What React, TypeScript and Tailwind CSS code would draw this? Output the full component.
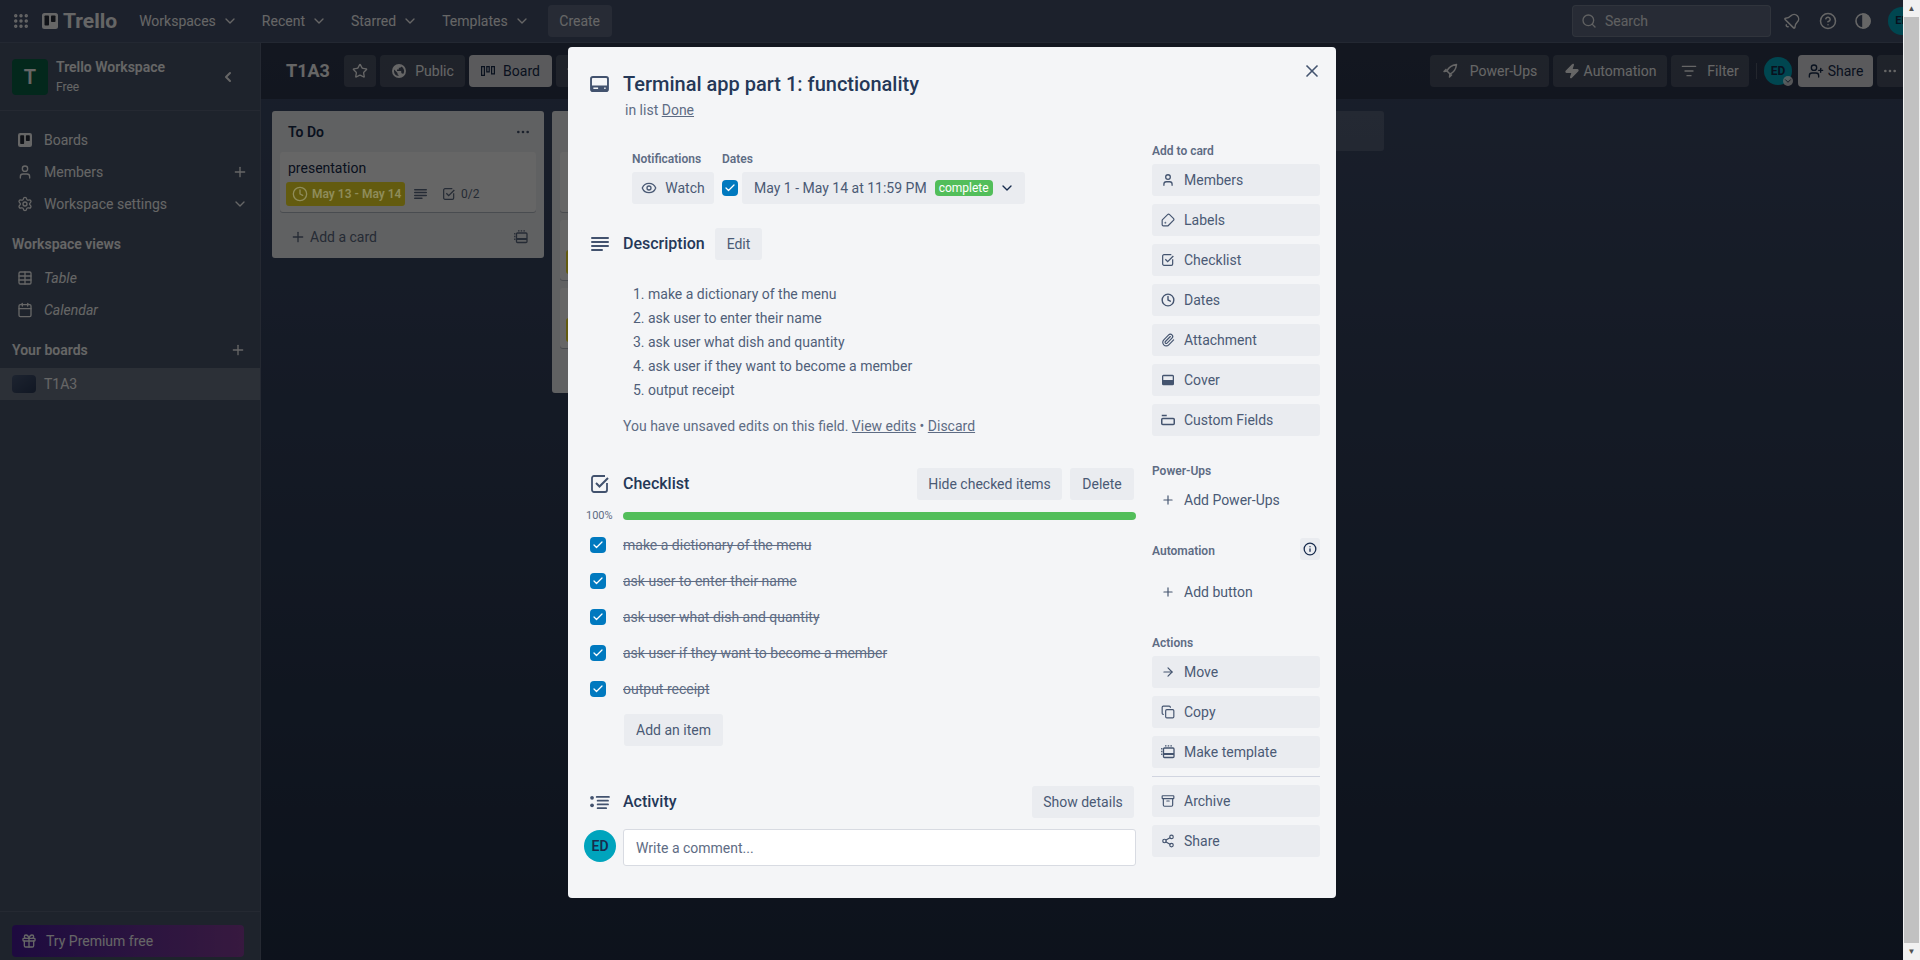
import { ReactNode } from 'react'
import {
  ArrowRight, Bell, Check, ChevronDown, ChevronLeft, Clock, Copy, Ellipsis, Eye, Grip,
  Info, ListFilter, Paperclip, Plus, Search, Settings, Share2, Star, Tag,
  User, UserPlus, X, Zap, CircleHelp, Archive, Calendar, Table, Gift,
} from 'lucide-react'

function CardIcon({ className }: { className?: string }) {
  return (
    <svg viewBox="0 0 20 17" className={className} fill="none">
      <rect x="1" y="1" width="18" height="15" rx="2" stroke="currentColor" strokeWidth="2" />
      <path d="M1 10h18v4a2 2 0 0 1-2 2H3a2 2 0 0 1-2-2z" fill="currentColor" />
      <path d="M3.5 13h5M15 13h1.5" stroke="#f4f5f7" strokeWidth="1.4" />
    </svg>
  )
}

function LinesIcon({ className }: { className?: string }) {
  return (
    <svg viewBox="0 0 18 16" className={className} fill="currentColor">
      <rect x="0" y="1" width="18" height="2" rx="1" />
      <rect x="0" y="5" width="18" height="2" rx="1" />
      <rect x="0" y="9" width="18" height="2" rx="1" />
      <rect x="0" y="13" width="12" height="2" rx="1" />
    </svg>
  )
}

function ChecklistIcon({ className }: { className?: string }) {
  return (
    <svg viewBox="0 0 18 18" className={className} fill="none" stroke="currentColor" strokeWidth="1.8">
      <path d="M16 8v7a2 2 0 0 1-2 2H3a2 2 0 0 1-2-2V3a2 2 0 0 1 2-2h11" />
      <path d="M5 8l3.5 3.5L17 3" strokeWidth="2" />
    </svg>
  )
}

function ActivityIcon({ className }: { className?: string }) {
  return (
    <svg viewBox="0 0 21 16" className={className} fill="currentColor">
      <circle cx="2" cy="3" r="2" />
      <circle cx="2" cy="11" r="2" />
      <rect x="6" y="1" width="15" height="2" rx="1" />
      <rect x="7" y="5" width="13" height="2" rx="1" />
      <rect x="7" y="9" width="13" height="2" rx="1" />
      <rect x="7" y="13" width="11" height="2" rx="1" />
    </svg>
  )
}

function CoverIcon({ className }: { className?: string }) {
  return (
    <svg viewBox="0 0 14 12" className={className} fill="none">
      <rect x="0.75" y="0.75" width="12.5" height="10.5" rx="1" stroke="currentColor" strokeWidth="1.5" />
      <rect x="0.75" y="6" width="12.5" height="5.25" fill="currentColor" />
    </svg>
  )
}

function FieldsIcon({ className }: { className?: string }) {
  return (
    <svg viewBox="0 0 14 12" className={className} fill="none" stroke="currentColor" strokeWidth="1.5">
      <rect x="0.75" y="4.5" width="12.5" height="6" rx="1" />
      <path d="M0.75 1.5h5" />
    </svg>
  )
}

function TemplateIcon({ className }: { className?: string }) {
  return (
    <svg viewBox="0 0 14 14" className={className} fill="none" stroke="currentColor" strokeWidth="1.3">
      <rect x="2.5" y="3" width="10.5" height="9.5" rx="1" />
      <path d="M2.5 9h10.5" strokeWidth="2" />
      <path d="M0.8 3v8M4 0.8h7" strokeDasharray="1.5 1.2" />
    </svg>
  )
}

function BoardIcon({ className }: { className?: string }) {
  return (
    <svg viewBox="0 0 14 12" className={className} fill="currentColor">
      <path d="M0 1h4v10H0zM1.2 2.2v7.6h1.6V2.2zM5.2 1h3.6v6.5H5.2zM6.4 2.2v4.1h1.2V2.2zM10 1h4v8.5h-4zM11.2 2.2v6.1h1.6V2.2z" fillRule="evenodd" />
    </svg>
  )
}

function TrelloMark({ className }: { className?: string }) {
  return (
    <svg viewBox="0 0 16 16" className={className}>
      <rect width="16" height="16" rx="2.5" fill="currentColor" />
      <rect x="2.5" y="2.5" width="4.5" height="10" rx="0.8" fill="#2a2f3a" />
      <rect x="9" y="2.5" width="4.5" height="6.5" rx="0.8" fill="#2a2f3a" />
    </svg>
  )
}

function GlobeIcon({ className }: { className?: string }) {
  return (
    <svg viewBox="0 0 16 16" className={className} fill="currentColor">
      <path d="M8 1a7 7 0 1 0 0 14A7 7 0 0 0 8 1zM3 8c0-.5.1-1 .2-1.400L6.500 10v.8c0 .7.5 1.200 1 1.200v1A5 5 0 0 1 3 8zm9 3.200c-.2-.5-.6-.9-1.100-.9h-.6V8.500c0-.3-.2-.6-.6-.6H6V6.500h1.200c.3 0 .6-.2.6-.6V4.700h1.200c.7 0 1.200-.5 1.200-1.200A5 5 0 0 1 12 11.200z" />
    </svg>
  )
}

function RocketIcon({ className }: { className?: string }) {
  return (
    <svg viewBox="0 0 16 16" className={className} fill="none" stroke="currentColor" strokeWidth="1.5" strokeLinejoin="round">
      <path d="M14.500 1.500C10 2 6.500 4.500 5 8l3 3c3.500-1.500 6-5 6.500-9.500z" />
      <path d="M5 8l-3 .5L4.500 6M8 11l-.5 3 2.500-2.500" />
    </svg>
  )
}

function NavButton({ label }: { label: string }) {
  return (
    <div className="flex items-center gap-1.5 h-8 px-3 text-sm text-white">
      {label}
      <ChevronDown className="w-4 h-4" />
    </div>
  )
}

function TopBar() {
  return (
    <header className="flex items-center h-[43px] shrink-0 pl-3 bg-[#46536f] border-b border-white/10">
      <Grip className="w-[18px] h-[18px] text-white" strokeWidth={2.6} />
      <div className="flex items-center ml-3 mr-[10px] text-white">
        <TrelloMark className="w-4 h-4" />
        <span className="ml-[5px] text-[21px] font-bold leading-none">Trello</span>
      </div>
      <div className="flex items-center">
        <NavButton label="Workspaces" />
        <NavButton label="Recent" />
        <NavButton label="Starred" />
        <NavButton label="Templates" />
      </div>
      <div className="flex items-center justify-center ml-[6px] w-16 h-8 rounded bg-white/15 text-sm text-white">Create</div>
      <div className="flex-1" />
      <div className="flex items-center gap-2 w-[199px] h-8 px-2 rounded bg-white/15 border border-white/15 text-sm text-white/90">
        <Search className="w-4 h-4" />
        Search
      </div>
      <div className="flex items-center gap-[18px] ml-3 text-white">
        <Bell className="w-[18px] h-[18px] rotate-45" />
        <CircleHelp className="w-[18px] h-[18px]" />
        <svg viewBox="0 0 16 16" className="w-4 h-4" fill="none" stroke="currentColor" strokeWidth="1.6">
          <circle cx="8" cy="8" r="7" />
          <path d="M8 1a7 7 0 0 1 0 14z" fill="currentColor" />
        </svg>
      </div>
      <div className="flex items-center justify-center shrink-0 ml-[17px] -mr-[13px] w-7 h-7 rounded-full bg-[#00b0c8] text-[11px] font-bold text-[#172b4d]">ED</div>
    </header>
  )
}

function SideLink({ icon, label, right, italic }: { icon: ReactNode; label: string; right?: ReactNode; italic?: boolean }) {
  return (
    <div className="flex items-center h-8 pl-[17px] pr-3 text-sm text-white">
      <span className="flex justify-center w-4 mr-[11px]">{icon}</span>
      <span className={italic ? 'italic' : ''}>{label}</span>
      <span className="ml-auto">{right}</span>
    </div>
  )
}

function Sidebar() {
  return (
    <aside className="flex flex-col w-[261px] shrink-0 bg-[#4b576e] border-r border-white/10">
      <div className="flex items-center h-[68px] pl-3 pr-6 border-b border-white/10">
        <div className="flex items-center justify-center w-9 h-9 rounded bg-[#086446] text-xl font-semibold text-white">T</div>
        <div className="ml-2 text-white">
          <div className="text-sm font-semibold leading-5">Trello Workspace</div>
          <div className="text-xs leading-5">Free</div>
        </div>
        <ChevronLeft className="ml-auto w-4 h-4 text-white" strokeWidth={3} />
      </div>
      <div className="pt-[13px]">
        <SideLink icon={<TrelloMark className="w-3.5 h-3.5" />} label="Boards" />
        <SideLink icon={<User className="w-4 h-4" />} label="Members" right={<Plus className="w-4 h-4" />} />
        <SideLink icon={<Settings className="w-4 h-4" />} label="Workspace settings" right={<ChevronDown className="w-4 h-4" />} />
      </div>
      <div className="mt-[8px] px-3 h-8 flex items-center text-sm font-semibold text-white">Workspace views</div>
      <div className="mt-[2px]">
        <SideLink icon={<Table className="w-4 h-4" />} label="Table" italic />
        <SideLink icon={<Calendar className="w-4 h-4" />} label="Calendar" italic />
      </div>
      <div className="flex items-center justify-between mt-[8px] pl-3 pr-3 h-8 text-sm font-semibold text-white">
        Your boards
        <Plus className="w-4 h-4 mr-0.5" />
      </div>
      <div className="flex items-center h-8 mt-[2px] pl-3 bg-white/20 text-sm text-white">
        <div className="w-6 h-[18px] mr-2 rounded-sm bg-gradient-to-br from-[#4a5a78] to-[#2a3a58]" />
        T1A3
      </div>
      <div className="mt-auto flex items-center h-[49px] pt-[9px] px-3 border-t border-white/10">
        <div className="flex items-center gap-[9px] w-[232px] h-8 px-[9px] rounded bg-gradient-to-r from-[#4b1a9f] to-[#8a3f9f] text-sm text-white">
          <Gift className="w-4 h-4" />
          Try Premium free
        </div>
      </div>
    </aside>
  )
}

function HeadButton({ children, light, className }: { children: ReactNode; light?: boolean; className?: string }) {
  return (
    <div className={`flex items-center justify-center h-8 rounded text-sm ${light ? 'bg-white/85 text-[#172b4d]' : 'bg-white/15 text-white'} ${className ?? ''}`}>
      {children}
    </div>
  )
}

function BoardHeader() {
  return (
    <div className="flex items-center h-14 shrink-0 pl-[25px] bg-black/25">
      <div className="mr-[14px] w-11 text-lg font-bold text-white">T1A3</div>
      <div className="flex items-center gap-1">
        <div className="flex items-center justify-center w-8 h-8 rounded bg-white/15 text-white">
          <Star className="w-4 h-4" />
        </div>
        <HeadButton className="w-[85px] gap-2">
          <GlobeIcon className="w-4 h-4" />
          Public
        </HeadButton>
        <HeadButton light className="w-[83px] gap-2">
          <BoardIcon className="w-3.5 h-3" />
          Board
        </HeadButton>
        <HeadButton className="w-10 !justify-start pl-2">
          <ChevronDown className="w-4 h-4" />
        </HeadButton>
      </div>
      <div className="flex items-center gap-1 ml-auto">
        <HeadButton className="w-[119px] gap-3">
          <RocketIcon className="w-4 h-4" />
          Power-Ups
        </HeadButton>
        <HeadButton className="w-[114px] gap-1">
          <Zap className="w-4 h-4" fill="currentColor" />
          Automation
        </HeadButton>
        <HeadButton className="w-[78px] gap-2.5">
          <ListFilter className="w-4 h-4" />
          Filter
        </HeadButton>
        <div className="w-px h-4 mx-[3px] bg-white/20" />
        <div className="relative flex items-center justify-center mr-[2px] w-7 h-7 rounded-full bg-[#00b0c8] text-xs font-bold text-[#172b4d]">
          ED
          <ChevronDown className="absolute -right-px -bottom-px w-2.5 h-2.5 rounded-full bg-white/80" />
        </div>
        <HeadButton light className="w-[75px] gap-1">
          <UserPlus className="w-4 h-4" />
          Share
        </HeadButton>
        <div className="flex items-center justify-center w-[26px] h-8 rounded-l bg-white/15 text-white">
          <Ellipsis className="w-4 h-4" />
        </div>
      </div>
    </div>
  )
}

function MiniCard({ title, badge }: { title: string; badge?: boolean }) {
  return (
    <div className="h-[60px] rounded-[3px] bg-white shadow-[0_1px_0_#091e4240] px-2 pt-1.5">
      <div className="h-5 text-sm leading-5 text-[#172b4d]">{title}</div>
      {badge && (
        <div className="flex items-center gap-[9px] -ml-0.5 mt-1 text-[#5e6c84]">
          <div className="flex items-center gap-1 shrink-0 w-[119px] h-6 pl-1.5 rounded-[3px] bg-[#f8e426] text-xs font-semibold whitespace-nowrap">
            <span className="relative z-10 flex items-center gap-1 text-[#8f8c5a]">
              <Clock className="w-4 h-4" />
              May 13 - May 14
            </span>
          </div>
          <LinesIcon className="w-[13px] h-3" />
          <div className="flex items-center gap-1.5 ml-[7px] text-xs">
            <ChecklistIcon className="w-3 h-3" />
            0/2
          </div>
        </div>
      )}
    </div>
  )
}

function SideButton({ icon, label, plain }: { icon: ReactNode; label: string; plain?: boolean }) {
  return (
    <div className={`flex items-center h-8 pl-[9px] rounded-[3px] text-sm text-[#4a5a75] ${plain ? '' : 'bg-[#eaecf0]'}`}>
      <span className="flex justify-center w-[14px] mr-[9px] text-[#44546f]">{icon}</span>
      {label}
    </div>
  )
}

function GreyButton({ children, className }: { children: ReactNode; className?: string }) {
  return (
    <div className={`flex items-center justify-center h-8 rounded-[3px] bg-[#eaecf0] text-sm text-[#4a5a75] ${className ?? ''}`}>
      {children}
    </div>
  )
}

function Tick({ className }: { className?: string }) {
  return (
    <div className={`flex items-center justify-center w-4 h-4 rounded-sm bg-[#0079bf] text-white ${className ?? ''}`}>
      <Check className="w-3 h-3" strokeWidth={2.5} />
    </div>
  )
}

function Label({ children }: { children: ReactNode }) {
  return <div className="h-[21px] text-xs font-semibold leading-4 text-[#5e6c84]">{children}</div>
}

const steps = [
  'make a dictionary of the menu',
  'ask user to enter their name',
  'ask user what dish and quantity',
  'ask user if they want to become a member',
  'output receipt',
]

const iconClass = 'w-3.5 h-3.5'
const gutterClass = 'flex justify-center w-[39px] pl-1.5 pr-[14px] text-[#42526e]'

function CardModal() {
  return (
    <div className="absolute z-20 left-[568px] top-[47px] flex w-[768px] h-[851px] rounded-sm bg-[#f4f5f7] text-[#253858]">
      <div className="w-[568px] pl-4 pt-[27px] shrink-0">
        <div className="flex items-center h-5">
          <div className={gutterClass}>
            <CardIcon className="w-[19px] h-4 shrink-0" />
          </div>
          <h1 className="text-[20px] font-medium leading-6">Terminal app part 1: functionality</h1>
        </div>
        <div className="mt-[6px] ml-[41px] h-5 text-sm leading-5 text-[#5e6c84]">
          in list <span className="underline">Done</span>
        </div>

        <div className="ml-12 mt-[31px] flex gap-2">
          <div>
            <div className="text-xs font-semibold leading-4 text-[#5e6c84]">Notifications</div>
            <GreyButton className="mt-[5px] w-[82px] gap-2">
              <Eye className="w-4 h-4" />
              Watch
            </GreyButton>
          </div>
          <div>
            <div className="text-xs font-semibold leading-4 text-[#5e6c84]">Dates</div>
            <div className="flex items-center mt-[5px]">
              <Tick className="mr-1" />
              <GreyButton className="w-[283px] !justify-start pl-3">
                May 1 - May 14 at 11:59 PM
                <span className="ml-2 h-4 px-1 rounded-sm bg-[#52be5a] text-xs leading-4 text-white">complete</span>
                <ChevronDown className="ml-1.5 w-4 h-4 text-[#172b4d]" />
              </GreyButton>
            </div>
          </div>
        </div>

        <div className="flex items-center mt-6">
          <div className={gutterClass}>
            <LinesIcon className="w-[18px] h-4 shrink-0" />
          </div>
          <h2 className="w-[84px] text-base font-medium">Description</h2>
          <GreyButton className="ml-2 w-[47px]">Edit</GreyButton>
        </div>

        <ol className="mt-[22px] ml-[64px] list-decimal text-sm leading-6 text-[#505f79]">
          {steps.map((s) => (
            <li key={s}>{s}</li>
          ))}
        </ol>
        <p className="mt-3 ml-[39px] text-sm leading-6 text-[#5e6c84]">
          You have unsaved edits on this field. <span className="underline">View edits</span> • <span className="underline">Discard</span>
        </p>

        <div className="flex items-center mt-[30px]">
          <div className={gutterClass}>
            <ChecklistIcon className="w-[18px] h-[18px] shrink-0" />
          </div>
          <h2 className="text-base font-medium">Checklist</h2>
          <GreyButton className="ml-auto w-[145px]">Hide checked items</GreyButton>
          <GreyButton className="ml-2 mr-0.5 w-16">Delete</GreyButton>
        </div>
        <div className="flex items-center mt-3 h-2">
          <span className="w-[39px] pl-0.5 text-[11px] text-[#5e6c84]">100%</span>
          <div className="flex-1 h-2 rounded bg-[#52be5a]" />
        </div>
        <div className="mt-[7px]">
          {steps.map((s) => (
            <div key={s} className="flex items-center h-9">
              <div className="w-[39px] pl-1.5">
                <Tick />
              </div>
              <span className="text-sm text-[#5e6c84] line-through">{s}</span>
            </div>
          ))}
        </div>
        <GreyButton className="ml-[40px] mt-[7px] w-[99px]">Add an item</GreyButton>

        <div className="flex items-center mt-10">
          <div className={gutterClass}>
            <ActivityIcon className="w-5 h-[15px] shrink-0" />
          </div>
          <h2 className="text-base font-medium">Activity</h2>
          <GreyButton className="ml-auto mr-0.5 w-[102px]">Show details</GreyButton>
        </div>
        <div className="flex items-start mt-[11px]">
          <div className="flex items-center justify-center w-8 h-8 mt-px mr-[7px] rounded-full bg-[#00a4bd] text-sm font-semibold text-[#172b4d]">ED</div>
          <div className="flex items-center flex-1 h-[37px] pl-3 rounded-[3px] bg-white border border-[#d8dbe2] text-sm text-[#5e6c84]">
            Write a comment...
          </div>
        </div>
      </div>

      <div className="relative flex-1 px-4 pt-[96px]">
        <X className="absolute right-[14px] top-[14px] w-5 h-5 text-[#44546f]" />
        <Label>Add to card</Label>
        <div className="flex flex-col gap-2">
          <SideButton icon={<User className={iconClass} strokeWidth={2.2} />} label="Members" />
          <SideButton icon={<Tag className={`${iconClass} rotate-[-90deg]`} strokeWidth={2} />} label="Labels" />
          <SideButton icon={<ChecklistIcon className="w-3 h-3" />} label="Checklist" />
          <SideButton icon={<Clock className={iconClass} strokeWidth={2.4} />} label="Dates" />
          <SideButton icon={<Paperclip className={iconClass} strokeWidth={2} />} label="Attachment" />
          <SideButton icon={<CoverIcon className="w-3 h-3" />} label="Cover" />
          <SideButton icon={<FieldsIcon className="w-3.5 h-3" />} label="Custom Fields" />
        </div>
        <div className="mt-[27px]">
          <Label>Power-Ups</Label>
          <SideButton plain icon={<Plus className={iconClass} />} label="Add Power-Ups" />
        </div>
        <div className="flex items-center justify-between mt-[22px] h-[22px]">
          <span className="pt-1 text-xs font-semibold text-[#5e6c84]">Automation</span>
          <span className="flex items-center justify-center w-5 h-[22px] rounded-[3px] bg-[#eaecf0]">
            <Info className="w-3.5 h-3.5 text-[#172b4d]" strokeWidth={2.2} />
          </span>
        </div>
        <div className="mt-4">
          <SideButton plain icon={<Plus className={iconClass} />} label="Add button" />
        </div>
        <div className="mt-[27px]">
          <Label>Actions</Label>
          <div className="flex flex-col gap-2">
            <SideButton icon={<ArrowRight className={iconClass} />} label="Move" />
            <SideButton icon={<Copy className={iconClass} />} label="Copy" />
            <SideButton icon={<TemplateIcon className={iconClass} />} label="Make template" />
          </div>
          <div className="h-px mt-2 bg-[#d1d5e0]" />
          <div className="flex flex-col gap-2 mt-2">
            <SideButton icon={<Archive className={iconClass} />} label="Archive" />
            <SideButton icon={<Share2 className={iconClass} />} label="Share" />
          </div>
        </div>
      </div>
    </div>
  )
}

export default function App() {
  return (
    <div className="relative flex w-[1920px] h-[960px] overflow-hidden font-['Roboto','Noto_Sans',sans-serif]">
      <div className="relative flex-1 min-w-0 overflow-hidden">
        <div className="flex flex-col h-full bg-gradient-to-b from-[#42506e] to-[#212f47]">
          <TopBar />
          <div className="flex flex-1 min-h-0">
            <Sidebar />
            <main className="flex flex-col flex-1 min-w-0">
              <BoardHeader />
              <div className="flex gap-2 pt-3 pl-[11px]">
                <div className="w-[272px] shrink-0 self-start rounded-[3px] bg-[#f1f2f4] px-2">
                  <div className="flex items-center justify-between h-[41px] pl-2 pr-[5px] text-sm font-semibold text-[#172b4d]">
                    To Do
                    <Ellipsis className="w-4 h-4 text-[#44546f]" />
                  </div>
                  <MiniCard title="presentation" badge />
                  <div className="flex items-center justify-between h-[46px] pt-1 pl-2.5 pr-2 text-sm text-[#5e6c84]">
                    <span className="flex items-center gap-1">
                      <Plus className="w-4 h-4" />
                      Add a card
                    </span>
                    <TemplateIcon className="w-3.5 h-3.5" />
                  </div>
                </div>
                <div className="w-[272px] h-[282px] shrink-0 rounded-[3px] bg-[#f1f2f4] px-2 pt-[41px]">
                  <div className="flex flex-col gap-2">
                    <MiniCard title="" />
                    <MiniCard title="" badge />
                    <MiniCard title="" badge />
                  </div>
                </div>
                <div className="w-[272px] h-40 shrink-0 rounded-[3px] bg-[#f1f2f4]" />
                <div className="w-[272px] h-10 shrink-0 rounded-[3px] bg-white/15" />
              </div>
            </main>
          </div>
        </div>
        <div className="absolute inset-0 bg-black/60" />
        <CardModal />
      </div>
      <div className="flex flex-col items-center w-[17px] shrink-0 bg-[#f1f1f1]">
        <div className="h-[17px] text-[8px] leading-[17px] text-[#505050]">▲</div>
        <div className="flex-1 w-[15px] bg-[#c1c1c1]" />
        <div className="h-[17px] text-[8px] leading-[17px] text-[#505050]">▼</div>
      </div>
    </div>
  )
}
